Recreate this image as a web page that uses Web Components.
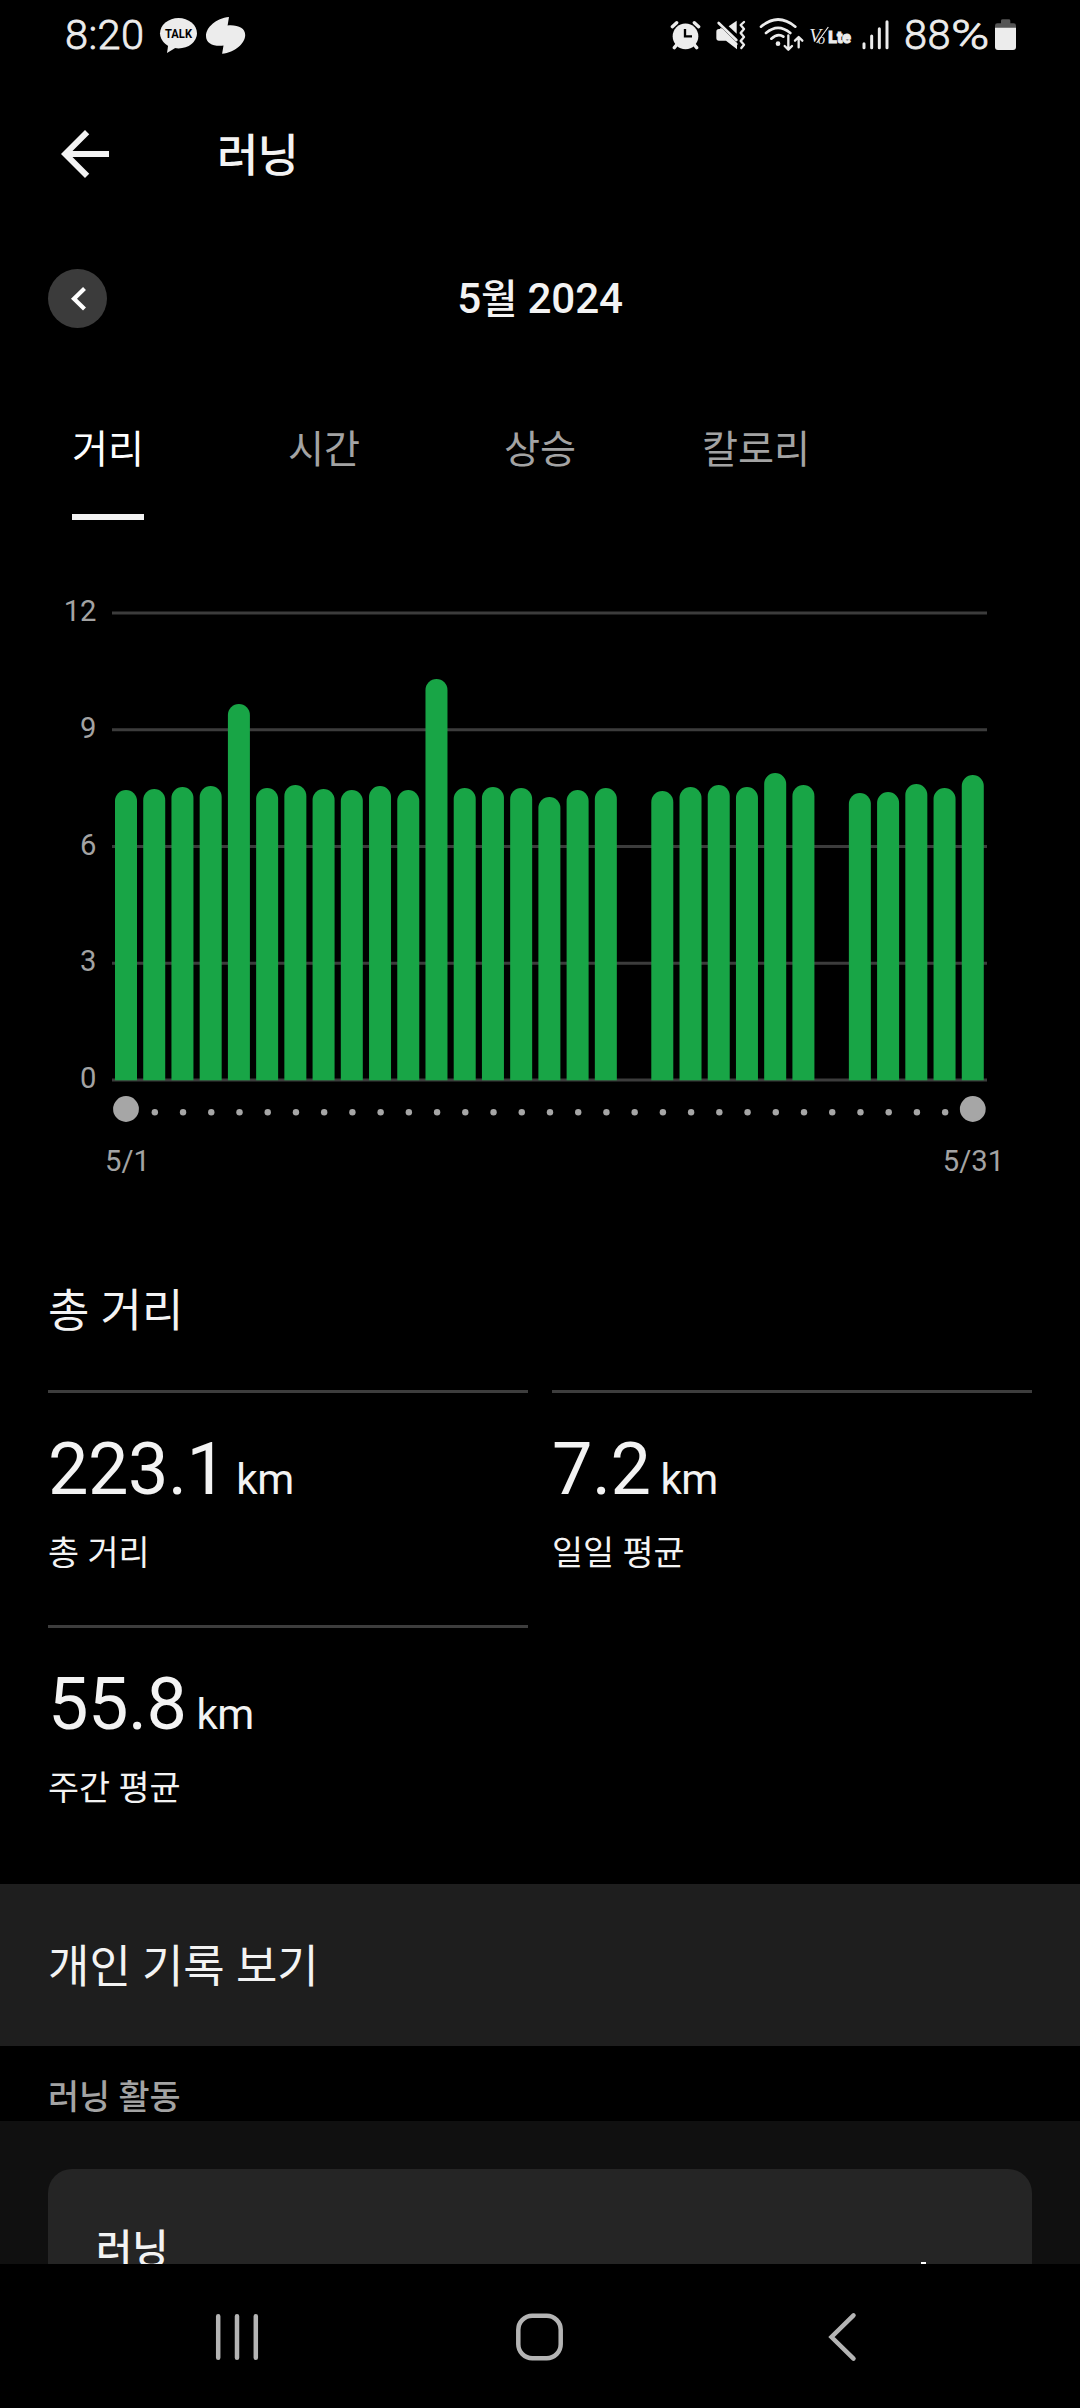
<!DOCTYPE html>
<html lang="ko">
<head>
<meta charset="utf-8">
<title>러닝</title>
<style>
html,body{margin:0;background:#000}
body{width:1080px;height:2408px;overflow:hidden;color:#f3f3f3;font-family:Roboto,"Noto Sans CJK KR",sans-serif}
</style>
</head>
<body>
<run-app></run-app>
<script>
const define = (name, html, after) => customElements.define(name, class extends HTMLElement {
  connectedCallback() {
    if (this.shadowRoot) return;
    const t = document.createElement('template');
    t.innerHTML = html;
    this.attachShadow({ mode: 'open' }).append(t.content.cloneNode(true));
    if (after) after(this, this.shadowRoot);
  }
});

define('status-bar', `
<style>
:host{display:flex;height:68px;align-items:center;color:#ececec;padding:0 64px 0 65px;box-sizing:border-box;justify-content:space-between}
div{display:flex;align-items:center}
svg{display:block;height:44px;flex:none}
.t{font-size:41.5px;line-height:44px;font-weight:300;-webkit-text-stroke:.8px #ececec;padding-top:2px}
.time{width:94px;letter-spacing:.4px}
.pct{letter-spacing:.5px;margin-left:14px;width:90px;white-space:nowrap}
.pct i{display:inline-block;font-style:normal;transform:scaleX(1.25);transform-origin:0 0}
</style>
<div>
  <span class="t time">8:20</span>
  <svg width="38" viewBox="159 12 38 44"><g fill="#ececec"><ellipse cx="178.5" cy="33.2" rx="18.5" ry="15.2"/><path d="M168.500 43L167 53L176 47.500Z"/></g><text x="178.5" y="38" text-anchor="middle" font-family="Roboto" font-weight="700" font-size="12.8" textLength="27" lengthAdjust="spacingAndGlyphs" fill="#000">TALK</text></svg>
  <svg width="41" viewBox="205 12 41 44" style="margin-left:8px"><path fill="#ececec" d="M229 17L227.600 25.400C238 24.600 245.200 28 245.200 35C245.200 43.500 235 52.300 222.100 53.800L223.500 45.600C213 46.600 206 43.500 206 36C206 27.500 216 18.200 229 17Z"/></svg>
</div>
<div style="margin-right:-1px">
  <svg width="31" viewBox="90 36 93 132"><circle cx="136.500" cy="109" r="38.500" fill="#ececec"/><g stroke="#ececec" stroke-width="10" stroke-linecap="round" fill="none"><path d="M97 80L110 68M176 80L163 68M103 143L112 132M170 143L161 132"/></g><path d="M135 87V109H156" stroke="#000" stroke-width="7" fill="none"/></svg>
  <svg width="32" viewBox="225 36 96 132" style="margin-left:14px"><g fill="#ececec"><path d="M266 79L290 62V101Z"/><path d="M229 95Q229 87 237 87H248L291 129V148L258 122H237Q229 122 229 114Z"/></g><path d="M236 69L289 120" stroke="#ececec" stroke-width="8" stroke-linecap="round"/><path d="M240 86L291 135" stroke="#ececec" stroke-width="8"/><path d="M312 66L302 75L312 87L302 99L312 111L302 123L312 134L304 144" stroke="#ececec" stroke-width="7" stroke-linecap="round" stroke-linejoin="round" fill="none"/></svg>
  <svg width="45" viewBox="357 36 135 132" style="margin-left:12px"><g fill="none" stroke="#ececec" stroke-width="8" stroke-linecap="round" stroke-linejoin="round"><path d="M363 80Q414 37 466 80M378 99Q414 68 451 99M394 116Q414 98 430 110"/><path d="M445 106V148M434 138L445 149L456 138M476 142V112M465 122L476 111L487 122" stroke-width="7"/></g><circle cx="414" cy="131" r="7" fill="#ececec"/></svg>
  <svg width="43" viewBox="507 36 129 132" style="margin-left:5px"><g fill="#ececec"><text x="508" y="126" font-family="Liberation Serif" font-style="italic" font-size="58" textLength="34">V</text><text x="533" y="131" font-family="Liberation Serif" font-style="italic" font-size="44">o</text><text x="565" y="130" font-family="Roboto" font-weight="900" font-size="50" textLength="68" lengthAdjust="spacingAndGlyphs" stroke="#ececec" stroke-width="3">Lte</text></g><path d="M565 81L530 129" stroke="#ececec" stroke-width="3.500"/></svg>
  <svg width="29" viewBox="663 36 87 132" style="margin-left:9px"><path d="M672 131V143M695 108V143M718 86V143M741 65V143" stroke="#ececec" stroke-width="9" stroke-linecap="round"/></svg>
  <span class="t pct">88<i>%</i></span>
  <svg width="23" viewBox="1062 36 69 132"><path d="M1065 84V77Q1065 70 1072 70H1083V62Q1083 58 1088 58H1106Q1111 58 1111 62V70H1121Q1128 70 1128 77V84Z" fill="#555"/><path d="M1065 83H1128V141Q1128 150 1119 150H1074Q1065 150 1065 141Z" fill="#ececec"/></svg>
</div>`);

define('app-header', `
<style>
:host{display:flex;height:172px;align-items:center;padding-left:49px;box-sizing:border-box}
svg{display:block}
span{font-size:45px;line-height:60px;font-weight:500;margin-left:96px;padding-top:6px;letter-spacing:-1px}
</style>
<svg width="72" height="72" viewBox="0 0 24 24"><path fill="#f3f3f3" d="M20 11H7.830l5.590-5.590L12 4l-8 8 8 8 1.410-1.410L7.830 13H20z"/></svg>
<span><slot></slot></span>`);

define('month-switcher', `
<style>
:host{display:grid;grid-template-columns:59px 1fr 59px;height:117px;align-items:center;padding:0 48px;box-sizing:border-box}
b{display:block;width:59px;height:59px;border-radius:50%;background:#3b3b3b}
svg{display:block}
span{text-align:center;font-size:42.200px;line-height:60px;font-weight:500;padding-top:2px;letter-spacing:-.2px}
::slotted(small){font-size:39.600px}
</style>
<b><svg width="59" height="59" viewBox="0 0 59 59"><path d="M36.500 19.500L26 29.700L36.500 40" fill="none" stroke="#fff" stroke-width="4.200"/></svg></b>
<span><slot></slot></span>`);

define('metric-tab', `
<style>
:host{display:flex;flex-direction:column;align-items:center;justify-content:flex-end;width:216px;color:#a3a3a3;font-size:39.200px}
span{line-height:60px;padding-bottom:34px;border-bottom:6px solid transparent}
:host([selected]){color:#fff}
:host([selected]) span{border-color:#f3f3f3}
</style><span><slot></slot></span>`);

define('metric-tabs', `
<style>:host{display:flex;height:163px;align-items:stretch}</style><slot></slot>`);

define('distance-chart', `
<style>
:host{display:block;height:710px}
svg{display:block}
text{font-family:Roboto,sans-serif;font-size:29.200px;fill:#a3a3a3}
</style>
<svg width="1080" height="710" viewBox="0 520 1080 710"></svg>`, (el, root) => {
  const tops = [790,789,787,786,704,788,785,789,790,786,790,679,788,787,788,797,790,788,0,791,787,785,787,773,785,0,793,792,784,788,775];
  const step = 875 / 31, base = 1080.2;
  let s = '';
  for (let i = 0; i <= 4; i++) {
    const y = 612.9 + i * 116.75;
    s += `<path d="M112 ${y}H987" stroke="#3c3c3c" stroke-width="3"/><text x="96.500" y="${y + 8.2}" text-anchor="end">${12 - 3 * i}</text>`;
  }
  tops.forEach((t, i) => {
    const x = 112 + step * i + 3, cx = x + 11;
    if (t) s += `<path fill="#18a546" d="M${x} ${base}V${t + 11}a11 11 0 0 1 22 0V${base}Z"/>`;
    s += i === 0 || i === 30
      ? `<circle cx="${cx}" cy="1109" r="12.900" fill="#a6a6a6"/>`
      : `<circle cx="${cx + .6}" cy="1112.200" r="3.200" fill="#a6a6a6"/>`;
  });
  s += '<text x="127.500" y="1171" text-anchor="middle">5/1</text><text x="973.500" y="1171" text-anchor="middle">5/31</text>';
  root.querySelector('svg').innerHTML = s;
});

define('stat-item', `
<style>
:host{display:block;height:235px;border-top:3px solid #3d3d3d;box-sizing:border-box}
.v{display:flex;align-items:baseline;gap:10px;padding-top:34px;font-size:72px;line-height:86px;letter-spacing:-.5px}
.u{font-size:42.200px}
.l{font-size:33.750px;line-height:48px;padding-top:7px}
</style>
<div class="v"><span><slot></slot></span><span class="u">km</span></div>
<div class="l"><slot name="label"></slot></div>`);

define('stats-summary', `
<style>
:host{display:block;height:654px;padding:0 48px;box-sizing:border-box}
h2{margin:0;font-size:45px;font-weight:400;line-height:60px;padding:52px 0 48px}
div{display:grid;grid-template-columns:480px 480px;column-gap:24px}
</style>
<h2><slot name="title"></slot></h2><div><slot></slot></div>`);

define('records-link', `
<style>:host{display:flex;align-items:center;height:162px;background:#1e1e1e;padding:6px 48px 0;box-sizing:border-box;font-size:45px;line-height:60px}</style>
<slot></slot>`);

define('section-label', `
<style>:host{display:flex;align-items:flex-end;height:75px;padding:0 48px 0;box-sizing:border-box;font-size:33.750px;line-height:46px;font-weight:500;color:#a3a3a3}</style>
<slot></slot>`);

define('activity-list', `
<style>
:host{display:block;height:143px;background:#101010;padding:48px 48px 0;box-sizing:border-box;overflow:hidden}
div{height:190px;background:#252525;border-radius:24px;display:flex;justify-content:space-between;align-items:flex-start;padding:51px 106px 0 48px;box-sizing:border-box;font-size:39.400px;line-height:60px;font-weight:500}
i{display:block;width:5px;height:30px;background:#fff;margin-top:42px}
</style>
<div><span><slot></slot></span><i></i></div>`);

define('system-nav', `
<style>
:host{display:flex;height:144px;align-items:center;padding:2px 213px 0 206px;justify-content:space-between;box-sizing:border-box}
svg{display:block;fill:none;stroke:#b4b4b4;stroke-width:4.500}
</style>
<svg width="62" height="62" viewBox="206 2306 62 62"><path stroke-linecap="round" d="M218.200 2316.300V2357.700M237 2316.300V2357.700M255.800 2316.300V2357.700"/></svg>
<svg width="62" height="62" viewBox="505.500 2306 62 62"><rect x="517.800" y="2315.800" width="42.400" height="42.400" rx="14"/></svg>
<svg width="62" height="62" viewBox="805 2306 62 62"><path stroke-linecap="round" d="M853.500 2315.300L831.500 2337L853.500 2358.700"/></svg>`);

define('run-app', `
<style>:host{display:flex;flex-direction:column;width:1080px;height:2408px;background:#000}</style>
<status-bar></status-bar>
<app-header>러닝</app-header>
<month-switcher>5<small>월</small> 2024</month-switcher>
<metric-tabs><metric-tab selected>거리</metric-tab><metric-tab>시간</metric-tab><metric-tab>상승</metric-tab><metric-tab>칼로리</metric-tab></metric-tabs>
<distance-chart></distance-chart>
<stats-summary><span slot="title">총 거리</span>
<stat-item>223.1<span slot="label">총 거리</span></stat-item>
<stat-item>7.2<span slot="label">일일 평균</span></stat-item>
<stat-item>55.8<span slot="label">주간 평균</span></stat-item>
</stats-summary>
<records-link>개인 기록 보기</records-link>
<section-label>러닝 활동</section-label>
<activity-list>러닝</activity-list>
<system-nav></system-nav>`);
</script>
</body>
</html>
